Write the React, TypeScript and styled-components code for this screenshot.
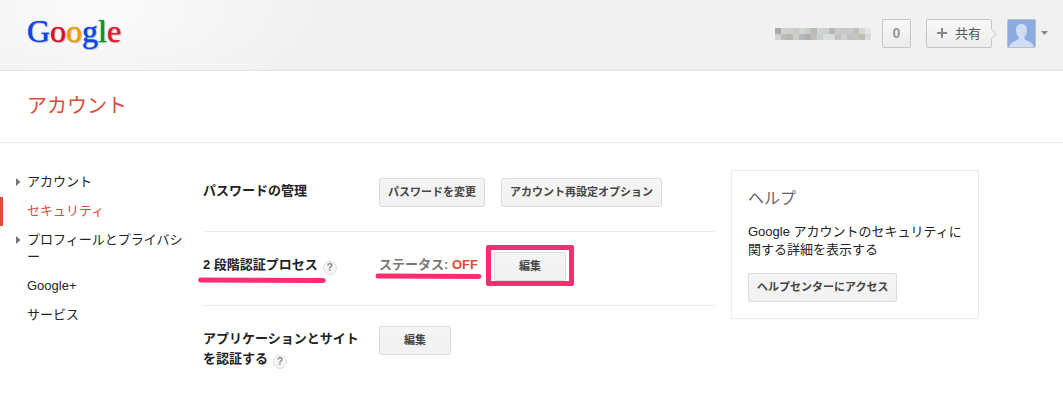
import React from 'react';
import styled, { createGlobalStyle } from 'styled-components';

const GlobalStyle = createGlobalStyle`
  * { box-sizing: border-box; }
  body {
    margin: 0;
    background: #fff;
    color: #222;
    font: 13px/17px "Liberation Sans", "Noto Sans CJK JP", sans-serif;
  }
  h1, h2, p { margin: 0; padding: 0; }
  button { font-family: inherit; }
`;

const Header = styled.header`
  display: flex;
  align-items: center;
  justify-content: space-between;
  height: 71px;
  padding: 0 15px 4px 27px;
  border-bottom: 1px solid #e5e5e5;
  background: radial-gradient(ellipse 220px 90px at 100px 10px, #fbfbfb 0, #f1f1f1 100%);
`;

const Logo = styled.a`
  padding-bottom: 4px;
  font: 32px/40px "Liberation Serif", serif;
  text-decoration: none;
`;

const Letter = styled.span<{ $color: string }>`
  color: ${(p) => p.$color};
  text-shadow: 0 0 1px ${(p) => p.$color}, 1px 1px 1px rgba(0, 0, 0, 0.25);
`;

const Tools = styled.div`
  display: flex;
  align-items: center;
`;

const Mosaic = styled.svg`
  display: block;
  margin: 1px 11px 0 0;
`;

const BarButton = styled.button`
  position: relative;
  display: flex;
  align-items: center;
  justify-content: center;
  min-width: 29px;
  height: 29px;
  margin-right: 15px;
  padding: 0 10px;
  border: 1px solid #c6c6c6;
  border-radius: 2px;
  background: linear-gradient(#f8f8f8, #ececec);
  color: #555;
  font-size: 13px;
  line-height: 17px;
`;

const CountButton = styled(BarButton)`
  padding: 0;
  color: #999;
  font-size: 14px;
  font-weight: bold;
`;

const PlusIcon = styled.svg`
  margin-right: 8px;
`;

const ShareTip = styled.svg`
  position: absolute;
  top: 8px;
  left: 100%;
`;

const AccountButton = styled.button`
  display: flex;
  align-items: center;
  gap: 5px;
  padding: 0;
  border: 0;
  background: none;
`;

const TitleBar = styled.div`
  padding: 20px 27px 21px;
  border-bottom: 1px solid #ebebeb;
`;

const PageTitle = styled.h1`
  color: #dd4b39;
  font-size: 20px;
  font-weight: normal;
  line-height: 30px;
`;

const Body = styled.div`
  display: grid;
  grid-template-columns: 187px minmax(0, 1fr) 248px;
  column-gap: 16px;
  align-items: start;
  padding: 15px 84px 24px 0;
`;

const Nav = styled.nav`
  padding-top: 10px;
`;

const NavLink = styled.a<{ $active?: boolean }>`
  display: flex;
  padding: 5px 0 7px;
  border-left: 3px solid ${(p) => (p.$active ? '#dd4b39' : 'transparent')};
  color: ${(p) => (p.$active ? '#dd4b39' : '#222')};
  text-decoration: none;
`;

const ArrowSlot = styled.span`
  flex: none;
  width: 24px;
  padding: 5px 0 0 13px;
  line-height: 0;
`;

const NavText = styled.span`
  flex: 1;
  word-break: break-all;
  line-break: anywhere;
`;

const Row = styled.section`
  display: grid;
  grid-template-columns: 160px minmax(0, 1fr);
  column-gap: 16px;
  align-items: start;
  padding: 20px 0 24px;

  & + & { border-top: 1px solid #ebebeb; }
`;

const RowTitle = styled.h2`
  padding-top: 3px;
  font-size: 13px;
  line-height: 20px;
`;

const Marked = styled.span`
  position: relative;
  display: inline-block;
`;

const Stroke = styled.svg<{ $drop: number; $start: number; $end: number }>`
  position: absolute;
  top: calc(100% + ${(p) => p.$drop}px);
  left: ${(p) => -p.$start}px;
  width: calc(100% + ${(p) => p.$start + p.$end}px);
  height: 8px;
  overflow: visible;
`;

const HelpButton = styled.button`
  display: inline-flex;
  align-items: center;
  justify-content: center;
  width: 14px;
  height: 14px;
  margin-left: 5px;
  padding: 0;
  border: 1px solid #ddd;
  border-radius: 50%;
  background: #f5f5f5;
  color: #888;
  font-size: 10px;
  font-weight: bold;
  line-height: 12px;
  vertical-align: -2px;
`;

const Actions = styled.div`
  display: flex;
  gap: 16px;
`;

const Status = styled.span`
  padding-top: 3px;
  color: #777;
  font-weight: bold;
  line-height: 20px;
  white-space: nowrap;
`;

const Off = styled.span`
  color: #dd4b39;
`;

const Button = styled.button`
  min-width: 72px;
  height: 29px;
  padding: 0 8px;
  border: 1px solid #dcdcdc;
  border-radius: 2px;
  background: linear-gradient(#f5f5f5, #f1f1f1);
  color: #444;
  font-size: 11px;
  font-weight: bold;
  line-height: 27px;
  white-space: nowrap;
`;

const Highlight = styled.span`
  position: relative;

  &::after {
    content: '';
    position: absolute;
    inset: -7px -8px -5px -8px;
    border: 5px solid #ff2d70;
    border-radius: 2px;
    pointer-events: none;
  }
`;

const HelpCard = styled.aside`
  margin-top: 12px;
  padding: 16px;
  border: 1px solid #ebebeb;
`;

const HelpTitle = styled.h2`
  color: #666;
  font-size: 16px;
  font-weight: normal;
  line-height: 24px;
`;

const HelpText = styled.p`
  margin: 12px 0 14px;
  line-height: 18px;
`;

const MOSAIC = [
  ['#a9aca5', '#cfd1cf', '#cfcfcd', '#cacac5', '#cfd6d8', '#cbcbc5', '#b9bcb6', '#d2d4d3', '#cccfcc', '#b1b8b9', '#cccbc8', '#c8c6c6', '#c8cacc', '#c0bfbe', '#d6d7d4', '#dfe5e9'],
  ['#d2d3d1', '#bcbcba', '#b7b7b6', '#cdcdc9', '#b3bbbe', '#b3aca7', '#bbbfbb', '#cbd0ce', '#d9dcdb', '#d9dcdb', '#c6bfbb', '#cfd2d5', '#c0c3c4', '#c9c5bd', '#bfbfba', '#d5dadd'],
];

const Arrow = () => (
  <ArrowSlot>
    <svg width="5" height="8" viewBox="0 0 5 8" aria-hidden="true">
      <path d="M0 0L4.500 4L0 8Z" fill="#777" />
    </svg>
  </ArrowSlot>
);

const Underline = ({ drop, start, end }: { drop: number; start: number; end: number }) => (
  <Stroke $drop={drop} $start={start} $end={end} viewBox="0 0 100 8" preserveAspectRatio="none" aria-hidden="true">
    <path d="M2 4L98 4.500" stroke="#ff2d70" strokeWidth="5" strokeLinecap="round" vectorEffect="non-scaling-stroke" />
  </Stroke>
);

const NAV = [
  { label: 'アカウント', arrow: true },
  { label: 'セキュリティ', active: true },
  { label: 'プロフィールとプライバシー', arrow: true },
  { label: 'Google+' },
  { label: 'サービス' },
];

const LOGO: [string, string][] = [
  ['G', '#1046e8'],
  ['o', '#d6102c'],
  ['o', '#f09a00'],
  ['g', '#1046e8'],
  ['l', '#0c941c'],
  ['e', '#e01c2c'],
];

export default function App() {
  return (
    <>
      <GlobalStyle />
      <Header>
        <Logo href="#" aria-label="Google">
          {LOGO.map(([ch, color], i) => (
            <Letter key={i} $color={color}>{ch}</Letter>
          ))}
        </Logo>
        <Tools>
          <Mosaic width="96" height="12" shapeRendering="crispEdges" aria-hidden="true">
            {MOSAIC.map((line, y) =>
              line.map((c, x) => <rect key={`${x}-${y}`} x={x * 6} y={y * 6} width="6" height="6" fill={c} />),
            )}
          </Mosaic>
          <CountButton>0</CountButton>
          <BarButton>
            <PlusIcon width="10" height="10" aria-hidden="true">
              <path d="M5 0V10M0 5H10" stroke="#888" strokeWidth="2" />
            </PlusIcon>
            共有
            <ShareTip width="6" height="12" viewBox="0 0 6 12" aria-hidden="true">
              <path d="M0 0.500L5 6L0 11.500" fill="#f3f3f3" stroke="#c6c6c6" />
            </ShareTip>
          </BarButton>
          <AccountButton aria-label="アカウント">
            <svg width="29" height="29" viewBox="0 0 29 29" aria-hidden="true">
              <rect x="0.500" y="0.500" width="28" height="28" rx="1" fill="#8eabdf" stroke="#c0c0c0" />
              <path d="M14.500 5C10.800 5 9 7.500 9 11C9 14 10 16.300 11.500 17.800V20C9.500 22 3.500 22.500 2 28H27C25.500 22.500 19.500 22 17.500 20V17.800C19 16.300 20 14 20 11C20 7.500 18.200 5 14.500 5Z" fill="#d0dcf4" />
            </svg>
            <svg width="7" height="4" aria-hidden="true">
              <path d="M0 0H7L3.500 4Z" fill="#888" />
            </svg>
          </AccountButton>
        </Tools>
      </Header>
      <TitleBar>
        <PageTitle>アカウント</PageTitle>
      </TitleBar>
      <Body>
        <Nav>
          {NAV.map((item) => (
            <NavLink key={item.label} href="#" $active={item.active}>
              {item.arrow ? <Arrow /> : <ArrowSlot />}
              <NavText>{item.label}</NavText>
            </NavLink>
          ))}
        </Nav>
        <main>
          <Row>
            <RowTitle>パスワードの管理</RowTitle>
            <Actions>
              <Button>パスワードを変更</Button>
              <Button>アカウント再設定オプション</Button>
            </Actions>
          </Row>
          <Row>
            <RowTitle>
              <Marked>2 段階認証プロセス<Underline drop={1} start={5} end={8} /></Marked>
              <HelpButton>?</HelpButton>
            </RowTitle>
            <Actions>
              <Status>
                <Marked>ステータス: <Off>OFF</Off><Underline drop={-3} start={3} end={3} /></Marked>
              </Status>
              <Highlight><Button>編集</Button></Highlight>
            </Actions>
          </Row>
          <Row>
            <RowTitle>
              アプリケーションとサイトを認証する
              <HelpButton>?</HelpButton>
            </RowTitle>
            <Actions>
              <Button>編集</Button>
            </Actions>
          </Row>
        </main>
        <HelpCard>
          <HelpTitle>ヘルプ</HelpTitle>
          <HelpText>Google アカウントのセキュリティに関する詳細を表示する</HelpText>
          <Button>ヘルプセンターにアクセス</Button>
        </HelpCard>
      </Body>
    </>
  );
}
